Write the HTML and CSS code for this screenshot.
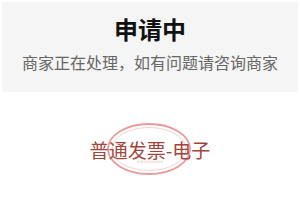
FILE: index.html
```html
<!DOCTYPE html>
<html lang="zh">
<head>
    <meta charset="UTF-8">
    <title>申请中</title>
    <link rel="stylesheet" href="styles.css">
</head>
<body>
    <div class="status-box">
        <div class="status-title">申请中</div>
        <div class="status-desc">商家正在处理，如有问题请咨询商家</div>
    </div>

    <div class="invoice">
        <svg class="stamp" width="90" height="56" viewBox="0 0 90 56">
            <ellipse cx="45" cy="28" rx="41" ry="25" fill="none" stroke="#e99a9a" stroke-width="1.8"/>
            <ellipse cx="45" cy="28" rx="37" ry="21.5" fill="none" stroke="#f4cccc" stroke-width="0.9"/>
            <text x="46" y="42" font-size="3.5" fill="#eab4b4" text-anchor="middle" font-family="DejaVu Sans">XXXXXXXXXXX</text>
        </svg>
        <span class="invoice-type">普通发票-电子</span>
    </div>
</body>
</html>
```

FILE: styles.css
```css
body {
    margin: 0;
    padding: 2px;
    min-height: 212px;
    box-sizing: border-box;
    background-color: #fff;
    font-family: "Noto Sans CJK SC", "Noto Sans", sans-serif;
}

.status-box {
    background-color: #f5f5f5;
    height: 90px;
    box-sizing: border-box;
    padding-top: 11px;
    text-align: center;
}

.status-title {
    font-size: 24px;
    font-weight: bold;
    color: #111;
    line-height: 32px;
}

.status-desc {
    font-size: 16px;
    color: #666;
    line-height: 24px;
    margin-top: 5px;
}

.invoice {
    position: relative;
    margin-top: 45px;
    padding-bottom: 30px;
    text-align: center;
}

.stamp {
    position: absolute;
    left: 102px;
    top: -16px;
}

.invoice-type {
    position: relative;
    font-size: 19px;
    color: #a3443b;
    line-height: 26px;
}
```
